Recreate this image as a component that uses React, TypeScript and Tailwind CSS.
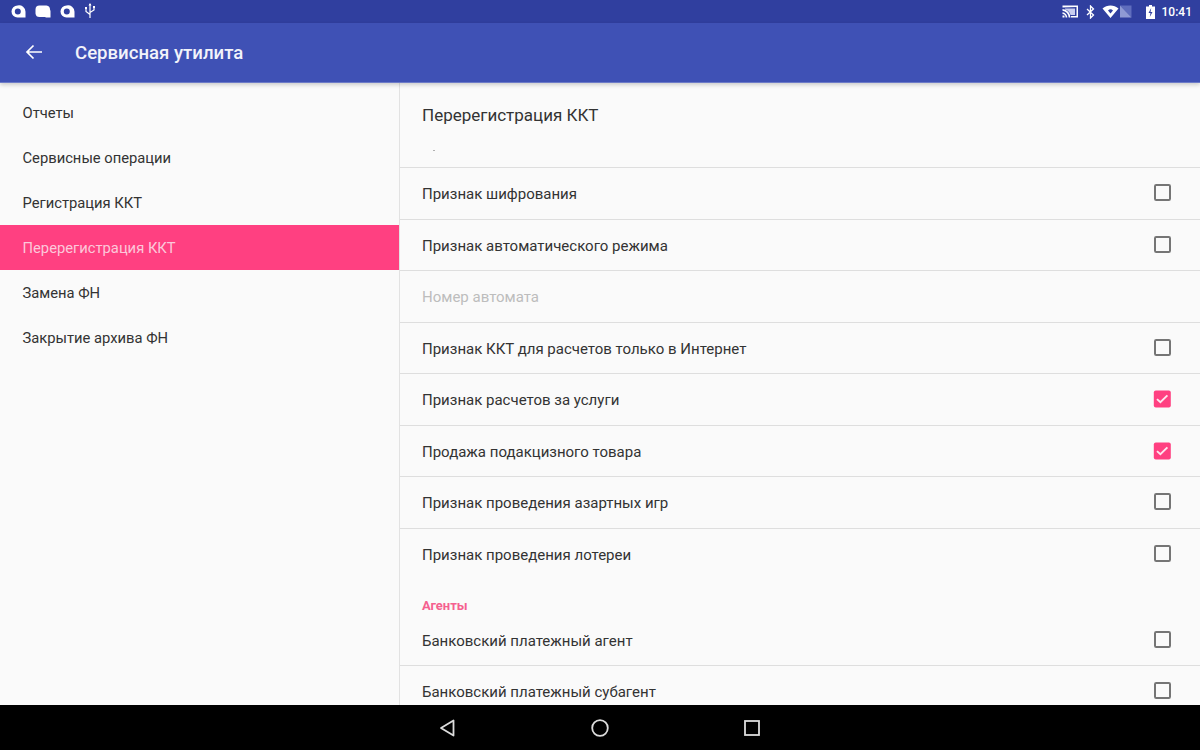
import React from "react";

const Check = ({ on }: { on?: boolean }) =>
  on ? (
    <svg width="18" height="18" viewBox="0 0 18 18" className="shrink-0">
      <rect x="0.800" y="0.400" width="17" height="17" rx="2" fill="#ff4081" />
      <path d="M4 9.100l3.400 3.200 7-6.900" fill="none" stroke="#fde7ef" strokeWidth="1.900" />
    </svg>
  ) : (
    <svg width="18" height="18" viewBox="0 0 18 18" className="shrink-0">
      <rect x="2" y="1" width="15" height="15" rx="1.200" fill="none" stroke="#757575" strokeWidth="2" />
    </svg>
  );

const Row = ({ label, on, box = true, dim, last }: { label: string; on?: boolean; box?: boolean; dim?: boolean; last?: boolean }) => (
  <div className={`h-[51.5px] shrink-0 flex items-center justify-between pl-[22px] pr-[29px] ${last ? "" : "border-b border-[#dedede]"}`}>
    <span className={`pt-[2px] text-[15px] ${dim ? "text-[#bdbdbd]" : "text-[#333333]"}`}>{label}</span>
    {box && <Check on={on} />}
  </div>
);

const Bubble = ({ className = "" }: { className?: string }) => (
  <svg width="16" height="13" viewBox="0 0 16 13" className={className}>
    <path fillRule="evenodd" d="M7.500 0.500a6 6 0 0 0 0 12h8V7a6.500 6.500 0 0 0-8-6.500zM7.800 3.500a3 3 0 1 1 0 6 3 3 0 0 1 0-6z" fill="#fff" />
  </svg>
);

const menu = ["Отчеты", "Сервисные операции", "Регистрация ККТ", "Перерегистрация ККТ", "Замена ФН", "Закрытие архива ФН"];

export default function App() {
  return (
    <div className="w-[1200px] h-[750px] flex flex-col overflow-hidden bg-[#fafafa]" style={{ fontFamily: "Roboto, 'Noto Sans', sans-serif" }}>
      <div className="h-[23px] shrink-0 bg-[#303f9f] flex items-center justify-between pl-[10px] pr-[8px]">
        <div className="flex items-center gap-[9px] pb-[1px]">
          <Bubble />
          <svg width="16" height="13" viewBox="0 0 16 13"><path d="M4.500 0.500h7a4 4 0 0 1 3.500 4 5 5 0 0 1 0.500 3v5h-4.500l-1-0.500H4.500A4 4 0 0 1 0.500 8.500v-4a4 4 0 0 1 4-4z" fill="#fff" /></svg>
          <Bubble className="-ml-[1px]" />
          <svg width="12" height="16" viewBox="0 0 12 16" className="ml-[1px] -translate-x-[1px]">
            <path d="M6 1v14M6 11.500L2 8.500V5.500M6 9.500l4-2.500V4.500" fill="none" stroke="#fff" strokeWidth="1.200" />
            <rect x="1" y="4" width="2" height="2" fill="#fff" />
            <rect x="9" y="3" width="2" height="2" fill="#fff" />
            <path d="M6 0l1.500 2.500h-3z" fill="#fff" />
          </svg>
        </div>
        <div className="flex items-center">
          <svg width="17" height="13" viewBox="0 0 17 13" className="mr-[7px]">
            <path d="M0.500 2.500V0.500h15.500v12H9V11h5.500V2z" fill="#fff" />
            <path d="M3 3.500h10v6.500H8.500A7.500 7.500 0 0 0 3 4.500z" fill="#c9cef0" />
            <path d="M0.500 4a8.500 8.500 0 0 1 8 8.500H6.700A6.800 6.800 0 0 0 0.500 5.800zM0.500 7.300a5.200 5.200 0 0 1 4.800 5.200H3.600A3.500 3.500 0 0 0 0.500 9zM0.500 10.500h2v2h-2z" fill="#fff" />
          </svg>
          <svg width="9" height="14" viewBox="0 0 9 14" className="mr-[7px]">
            <path d="M1 4l6.500 6L4.500 13V1l3 3L1 10" fill="none" stroke="#fff" strokeWidth="1.300" />
          </svg>
          <svg width="17" height="13" viewBox="0 0 17 13" className="mr-[1px]">
            <path fillRule="evenodd" d="M0.500 3.500C5 -0.500 12 -0.500 16.500 3.500L8.500 13zM6 5.500a3.500 3.500 0 0 1 5 0L8.500 8.500z" fill="#fff" />
          </svg>
          <svg width="12" height="13" viewBox="0 0 12 13" className="mr-[14px]">
            <path d="M0 0.500h11.500V12.500z" fill="#5f6dbd" />
            <path d="M0 0.500L11.500 12.500H0z" fill="#8f9ad4" />
          </svg>
          <svg width="9" height="14" viewBox="0 0 9 14" className="mr-[7px]">
            <path d="M3 0h3v1.500h3V14H0V1.500h3z" fill="#fff" />
            <path d="M5.200 3L2.500 8h2L3.800 12l2.700-5h-2z" fill="#303f9f" />
          </svg>
          <span className="text-[12px] font-medium text-white leading-none">10:41</span>
        </div>
      </div>
      <div className="h-[60px] shrink-0 bg-[#3f51b5] flex items-center pl-[25px] border-b border-[#6d7bc8] relative z-10 shadow-[0_2px_4px_rgba(0,0,0,0.18)]">
        <svg width="18" height="18" viewBox="0 0 18 18" className="mb-[2px]">
          <path d="M17 9H2M8.500 2.500L2 9l6.500 6.500" fill="none" stroke="#fff" strokeWidth="1.700" />
        </svg>
        <span className="ml-[32px] pt-[2px] text-[18.6px] font-medium text-[#f2f3fa]">Сервисная утилита</span>
      </div>
      <div className="flex-1 min-h-0 flex">
        <div className="w-[400px] shrink-0 border-r border-[#e2e2e2] pt-[7px]">
          {menu.map((m, i) => (
            <div key={m} className={`h-[45px] flex items-center pl-[22.5px] pt-[2px] text-[14.750px] ${i === 3 ? "bg-[#ff4081] text-[#fcc8da]" : "text-[#333333]"}`}>
              {m}
            </div>
          ))}
        </div>
        <div className="flex-1 min-w-0 flex flex-col overflow-hidden">
          <div className="h-[85px] shrink-0 pl-[22px] pt-[21px] border-b border-[#dedede] text-[#333333] text-[17px] leading-[22px] relative">
            Перерегистрация ККТ
            <div className="absolute left-[33px] top-[67px] w-[2px] h-px bg-[#b0b0b0]" />
          </div>
          <Row label="Признак шифрования" />
          <Row label="Признак автоматического режима" />
          <Row label="Номер автомата" box={false} dim />
          <Row label="Признак ККТ для расчетов только в Интернет" />
          <Row label="Признак расчетов за услуги" on />
          <Row label="Продажа подакцизного товара" on />
          <Row label="Признак проведения азартных игр" />
          <Row label="Признак проведения лотереи" last />
          <div className="h-[34.5px] shrink-0 flex items-end pl-[22px] pb-[1px] text-[13px] font-bold text-[#f5608f] leading-[16px]">Агенты</div>
          <Row label="Банковский платежный агент" />
          <Row label="Банковский платежный субагент" />
        </div>
      </div>
      <div className="h-[45px] shrink-0 bg-black flex items-center justify-center gap-[128px]">
        <svg width="24" height="24" viewBox="0 0 24 24">
          <path d="M17.500 4.500v15L5 12z" fill="none" stroke="#dcdcdc" strokeWidth="1.800" strokeLinejoin="round" />
        </svg>
        <svg width="24" height="24" viewBox="0 0 24 24">
          <circle cx="12" cy="12" r="7.800" fill="none" stroke="#dcdcdc" strokeWidth="1.800" />
        </svg>
        <svg width="24" height="24" viewBox="0 0 24 24">
          <rect x="5" y="5" width="14" height="14" fill="none" stroke="#dcdcdc" strokeWidth="1.800" />
        </svg>
      </div>
    </div>
  );
}
